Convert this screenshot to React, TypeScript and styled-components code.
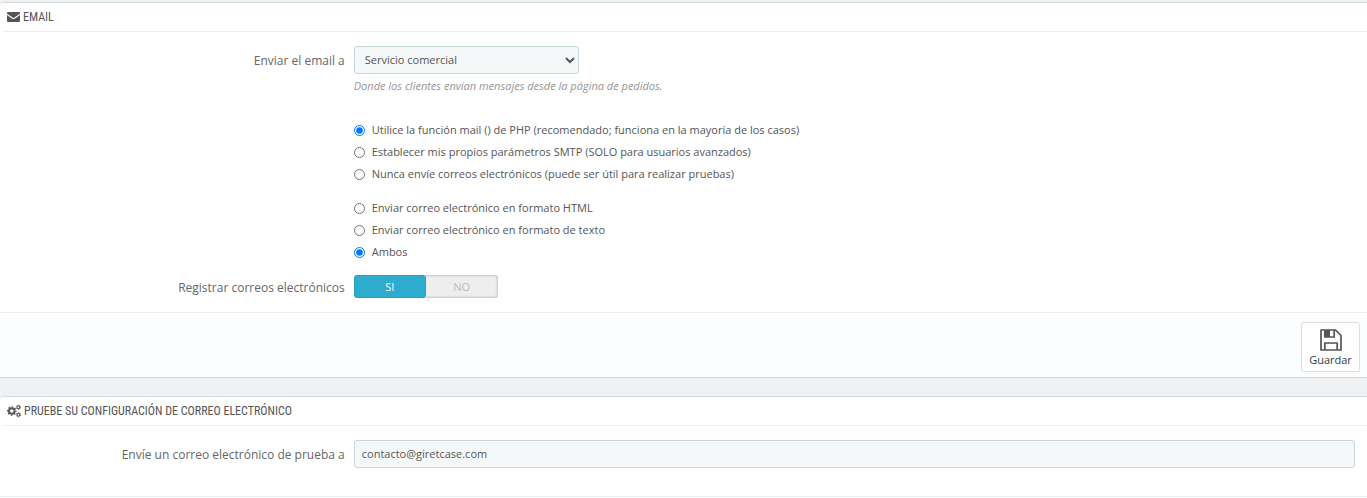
import React from "react";
import styled, { createGlobalStyle } from "styled-components";

const GlobalStyle = createGlobalStyle`
  * { box-sizing: border-box; }
  body {
    margin: 0;
    background: #eff1f2;
    color: #555;
    font: 11px/20px "Open Sans", sans-serif;
  }
`;

const Page = styled.main`
  display: flex;
  flex-direction: column;
  gap: 18px;
  padding-top: 2px;
`;

const Panel = styled.form`
  background: #fff;
  border-top: 1px solid #d3dddf;
  border-bottom: 1px solid #d3d5d9;
  border-top-left-radius: 4px;

  &:last-child {
    border-bottom: 0;
  }
`;

const Heading = styled.h3`
  display: flex;
  align-items: center;
  gap: 3px;
  height: 29px;
  margin: 0 0 0 3px;
  padding-left: 4px;
  border-bottom: 1px solid #eee;
  color: #555;
  font: 400 12px/20px "Ubuntu Condensed", "Roboto Condensed", "Liberation Sans Narrow", "Open Sans", sans-serif;
  text-transform: uppercase;
`;

const Fields = styled.div`
  padding: 14px 12px 0 8px;
`;

const Row = styled.div<{ $space?: number }>`
  display: grid;
  grid-template-columns: 25% minmax(0, 1fr);
  column-gap: 9px;
  margin-bottom: ${(p) => p.$space ?? 0}px;
`;

const Name = styled.label<{ $line?: number }>`
  color: #666;
  font-size: 12px;
  line-height: ${(p) => p.$line ?? 30}px;
  text-align: right;
`;

const Group = styled.div`
  grid-column: 2;
`;

const Select = styled.select`
  display: block;
  width: 225px;
  height: 28px;
  padding: 0 6px 2px;
  border: 1px solid #c7d6db;
  border-radius: 3px;
  background: #f5f8f9;
  color: #555;
  font: inherit;
`;

const Input = styled.input`
  display: block;
  width: 100%;
  height: 28px;
  padding: 0 7px 2px;
  border: 1px solid #c7d6db;
  border-radius: 3px;
  background: #f5f8f9;
  color: #555;
  font: inherit;
`;

const Help = styled.p`
  margin: 2px 0 0;
  color: #959595;
  font-style: italic;
`;

const Choice = styled.label`
  display: flex;
  align-items: center;
  gap: 7px;
  height: 22px;
  width: fit-content;

  input {
    width: 11px;
    height: 11px;
    margin: 0;
    accent-color: #0075ff;
  }
`;

const Choices = styled(Group)`
  display: flex;
  flex-direction: column;
`;

const Switch = styled.div`
  display: flex;
  width: 144px;
  height: 23px;
  border-radius: 3px;
  background: #eee;
  box-shadow: inset 0 0 3px rgba(0, 0, 0, 0.35);
  overflow: hidden;
`;

const SwitchOption = styled.label`
  flex: 0 0 50%;
  line-height: 24px;
  text-align: center;
  color: #bbb;

  input {
    appearance: none;
    position: absolute;
    margin: 0;
  }

  &:has(input:checked) {
    border: 1px solid #2aa0c0;
    border-radius: 3px;
    background: #2eacce;
    color: #fff;
    line-height: 22px;
  }
`;

const Footer = styled.footer`
  display: flex;
  justify-content: flex-end;
  padding: 9px 7px 5px;
  border-top: 1px solid #eee;
  background: #fcfdfe;

  &:empty {
    padding: 0 0 1px;
  }
`;

const SaveButton = styled.button`
  display: flex;
  flex-direction: column;
  align-items: center;
  width: 59px;
  height: 50px;
  padding: 6px 0 0;
  border: 1px solid #ddd;
  border-radius: 3px;
  background: #fff;
  color: #363a41;
  font: 11px/18px "Open Sans", sans-serif;
`;

const EnvelopeIcon = () => (
  <svg width="13" height="13" viewBox="0 0 13 13" aria-hidden="true">
    <rect y="1" width="13" height="10" rx="1" fill="currentColor" />
    <path d="M0 3.200C2 5 4 6 5.200 7q1.300 1 2.600 0C9 6 11 5 13 3.200" fill="none" stroke="#fff" strokeWidth="1.100" />
  </svg>
);

const CogsIcon = () => (
  <svg width="14" height="14" viewBox="0 0 14 14" fill="none" stroke="currentColor" aria-hidden="true">
    <circle cx="4.800" cy="7" r="2.800" strokeWidth="2" />
    <circle cx="4.800" cy="7" r="4.200" strokeWidth="1.200" strokeDasharray="1.650 1.650" strokeDashoffset="0.820" />
    <circle cx="11.400" cy="3.200" r="1.400" strokeWidth="1.100" />
    <circle cx="11.400" cy="3.200" r="2.200" strokeWidth="0.800" strokeDasharray="1.150 1.150" />
    <circle cx="11.400" cy="10.800" r="1.400" strokeWidth="1.100" />
    <circle cx="11.400" cy="10.800" r="2.200" strokeWidth="0.800" strokeDasharray="1.150 1.150" />
  </svg>
);

const FloppyIcon = () => (
  <svg width="22" height="22" viewBox="0 0 22 22" fill="none" stroke="#555" strokeWidth="1.700" strokeLinejoin="round" aria-hidden="true">
    <path d="M1 1h14.500L21 6.500V21H1zM4.800 21v-7h12.400v7M4.800 1v7h9.400V1" />
    <path d="M5 1h5v7H5z" fill="#555" stroke="none" />
  </svg>
);

const methods = [
  "Utilice la función mail () de PHP (recomendado; funciona en la mayoría de los casos)",
  "Establecer mis propios parámetros SMTP (SOLO para usuarios avanzados)",
  "Nunca envíe correos electrónicos (puede ser útil para realizar pruebas)",
];

const formats = [
  "Enviar correo electrónico en formato HTML",
  "Enviar correo electrónico en formato de texto",
  "Ambos",
];

function RadioList({ name, items, selected }: { name: string; items: string[]; selected: number }) {
  return (
    <Choices>
      {items.map((item, i) => (
        <Choice key={item}>
          <input type="radio" name={name} defaultChecked={i === selected} />
          {item}
        </Choice>
      ))}
    </Choices>
  );
}

export default function App() {
  return (
    <>
      <GlobalStyle />
      <Page>
        <Panel>
          <Heading>
            <EnvelopeIcon />
            Email
          </Heading>
          <Fields>
            <Row $space={23}>
              <Name htmlFor="recipient">Enviar el email a</Name>
              <Group>
                <Select id="recipient">
                  <option>Servicio comercial</option>
                </Select>
                <Help>Donde los clientes envían mensajes desde la página de pedidos.</Help>
              </Group>
            </Row>
            <Row $space={12}>
              <RadioList name="method" items={methods} selected={0} />
            </Row>
            <Row $space={12}>
              <RadioList name="format" items={formats} selected={2} />
            </Row>
            <Row $space={11}>
              <Name as="span" $line={26}>Registrar correos electrónicos</Name>
              <Switch role="radiogroup" aria-label="Registrar correos electrónicos">
                <SwitchOption>
                  <input type="radio" name="log" defaultChecked />
                  SI
                </SwitchOption>
                <SwitchOption>
                  <input type="radio" name="log" />
                  NO
                </SwitchOption>
              </Switch>
            </Row>
          </Fields>
          <Footer>
            <SaveButton type="button">
              <FloppyIcon />
              Guardar
            </SaveButton>
          </Footer>
        </Panel>
        <Panel>
          <Heading>
            <CogsIcon />
            Pruebe su configuración de correo electrónico
          </Heading>
          <Fields>
            <Row $space={26}>
              <Name htmlFor="test-email">Envíe un correo electrónico de prueba a</Name>
              <Input id="test-email" type="email" defaultValue="contacto@giretcase.com" />
            </Row>
          </Fields>
          <Footer />
        </Panel>
      </Page>
    </>
  );
}
